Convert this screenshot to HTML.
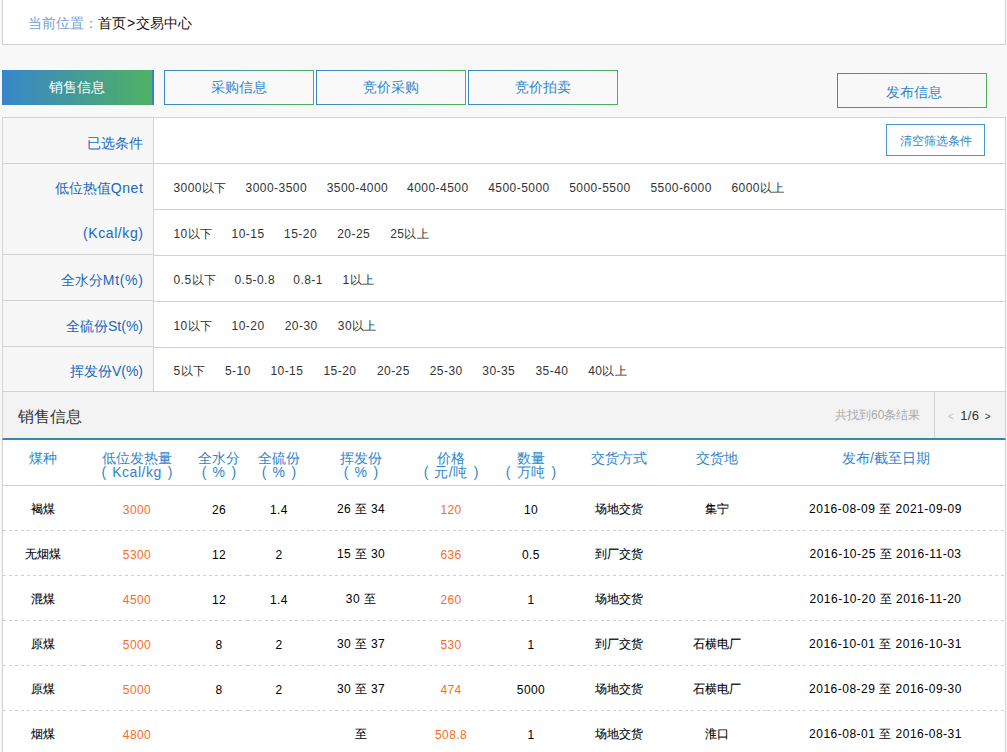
<!DOCTYPE html>
<html><head><meta charset="utf-8">
<style>
*{margin:0;padding:0;box-sizing:border-box}
html,body{width:1007px;height:752px;overflow:hidden;background:#f8f8f8;font-family:"Liberation Sans",sans-serif;color:#333}
.abs{position:absolute}
#crumb{left:2px;top:-1px;width:1004px;height:46px;border:1px solid #d2d2d2;background:#fff;font-size:14px;line-height:14px}
#crumb .t{position:absolute;left:25px;top:16px;white-space:nowrap}
#crumb .b{color:#6f9fd8}
#crumb .k{color:#111}
.tab{position:absolute;top:70px;height:35px;width:150px;border:1px solid;border-image:linear-gradient(to right,#3a89cd,#4bb35b) 1;font-size:14px;line-height:33px;text-align:center;color:#2f86cc;background:#f9f9f9}
#t1{left:2px;width:152px;border:0;background:linear-gradient(to right,#3886ca,#4fb163);color:#fff;line-height:35px;border-right:2px solid #2f82c9}
#t2{left:164px}#t3{left:316px}#t4{left:468px}
#pub{position:absolute;left:837px;top:73px;width:150px;height:35px;border:1px solid;border-image:linear-gradient(to right,#3a89cd,#4bb35b) 1;font-size:14px;line-height:33px;text-align:center;color:#2f86cc;padding-left:4px;padding-top:2px}
#filter{left:2px;top:117px;width:1004px;height:275px;border:1px solid #d2d2d2;background:#fff}
#fl{position:absolute;left:0;top:0;width:151px;height:273px;background:#f7f7f7;border-right:1px solid #d2d2d2}
.lrow{position:absolute;left:0;width:150px;border-bottom:1px solid #d2d2d2;text-align:right;padding-right:10px;color:#1768c0;font-size:14px;padding-top:2px}
.ls{margin-right:-.6px}
.rrow{position:absolute;left:151px;width:851px;border-bottom:1px solid #d2d2d2;font-size:12px;color:#333;white-space:nowrap}
.rrow span{position:absolute;top:1px;letter-spacing:.45px}
#clear{position:absolute;left:732px;top:6px;padding-top:1px;width:99px;height:32px;border:1px solid #4a93d2;color:#2f86cc;font-size:12px;line-height:30px;text-align:center}
#sh{left:2px;top:392px;width:1004px;height:48px;border:1px solid #d2d2d2;border-top:0;border-bottom:2px solid #3388b8;background:#f3f3f3}
#sh .title{position:absolute;left:15px;top:17px;font-size:16px;line-height:16px;color:#333}
#sh .cnt{position:absolute;left:832px;top:17px;font-size:12px;line-height:12px;color:#aaa}
#sh .sep{position:absolute;left:931px;top:0;width:1px;height:46px;background:#d2d2d2}
#sh .pg{position:absolute;left:945px;top:17px;font-size:13px;line-height:13px;color:#333;white-space:nowrap}
#sh .pg .l{color:#bbb;font-size:10px}
#sh .pg .r{font-size:10px;margin-left:5.5px}
#sh .pg .m{margin-left:6.5px;letter-spacing:.3px}
#tbl{left:2px;top:440px;width:1004px;height:320px;border-left:1px solid #d2d2d2;border-right:1px solid #d2d2d2;background:#fff}
table{border-collapse:separate;border-spacing:0;table-layout:fixed;width:1002px}
th{height:46px;border-bottom:1px solid #d2d2d2;font-weight:normal;color:#2f86cc;font-size:14px;line-height:14px;vertical-align:top;padding-top:11px}
td{height:45px;background:repeating-linear-gradient(to right,#cfcfcf 0 3px,transparent 3px 6px) left bottom/100% 1px no-repeat border-box;text-align:center;font-size:12px;color:#000;padding:2px 0 0}
td.o{color:#fa6c1e}
td{letter-spacing:.4px}
td.d{letter-spacing:.5px;padding-right:1px}
td.c{letter-spacing:0;-webkit-text-stroke:.1px #000}
th i{font-style:normal}
th i.pl{margin-right:6px}
th i.pr{margin-left:6px}
th b{font-weight:normal;letter-spacing:.5px}
</style></head><body>
<div id="crumb" class="abs"><div class="t"><span class="b">当前位置：</span><span class="k">首页<span style="margin:0 1px">&gt;</span>交易中心</span></div></div>

<div class="tab" id="t1">销售信息</div>
<div class="tab" id="t2">采购信息</div>
<div class="tab" id="t3">竞价采购</div>
<div class="tab" id="t4">竞价拍卖</div>
<div id="pub">发布信息</div>

<div id="filter" class="abs">
  <div id="fl"></div>
  <div class="lrow" style="top:0;height:46px;line-height:46px">已选条件</div>
  <div class="lrow" style="top:46px;height:91px;line-height:14px;padding-top:17px">低位热值<span class="ls" style="letter-spacing:.65px">Qnet</span><br><span class="ls" style="display:inline-block;margin-top:31px;letter-spacing:.6px">(Kcal/kg)</span></div>
  <div class="lrow" style="top:137px;height:46px;line-height:46px">全水分<span class="ls" style="letter-spacing:.7px">Mt(%)</span></div>
  <div class="lrow" style="top:183px;height:46px;line-height:46px">全硫份St(%)</div>
  <div class="lrow" style="top:229px;height:45px;line-height:45px;border-bottom:0">挥发份V(%)</div>

  <div class="rrow" style="top:0;height:46px"><div id="clear">清空筛选条件</div></div>
  <div class="rrow" style="top:46px;height:46px;line-height:46px"><span style="left:19.5px">3000以下</span><span style="left:91.6px">3000-3500</span><span style="left:172.7px">3500-4000</span><span style="left:253.1px">4000-4500</span><span style="left:334.2px">4500-5000</span><span style="left:415.2px">5000-5500</span><span style="left:496.4px">5500-6000</span><span style="left:577.4px">6000以上</span></div>
  <div class="rrow" style="top:92px;height:46px;line-height:46px"><span style="left:19.5px">10以下</span><span style="left:77.6px">10-15</span><span style="left:130.1px">15-20</span><span style="left:183.2px">20-25</span><span style="left:236.2px">25以上</span></div>
  <div class="rrow" style="top:138px;height:46px;line-height:46px"><span style="left:19.5px">0.5以下</span><span style="left:80.5px">0.5-0.8</span><span style="left:139.3px">0.8-1</span><span style="left:188.5px">1以上</span></div>
  <div class="rrow" style="top:184px;height:46px;line-height:46px"><span style="left:19.5px">10以下</span><span style="left:77.6px">10-20</span><span style="left:130.7px">20-30</span><span style="left:183.8px">30以上</span></div>
  <div class="rrow" style="top:230px;height:44px;line-height:44px;border-bottom:0"><span style="left:19.5px">5以下</span><span style="left:71.0px">5-10</span><span style="left:116.4px">10-15</span><span style="left:169.5px">15-20</span><span style="left:222.9px">20-25</span><span style="left:275.7px">25-30</span><span style="left:328.3px">30-35</span><span style="left:381.5px">35-40</span><span style="left:434.2px">40以上</span></div>
</div>

<div id="sh" class="abs">
  <div class="title">销售信息</div>
  <div class="cnt">共找到60条结果</div>
  <div class="sep"></div>
  <div class="pg"><span class="l">&lt;</span><span class="m">1/6</span><span class="r">&gt;</span></div>
</div>

<div id="tbl" class="abs">
<table>
<colgroup><col style="width:80px"><col style="width:108px"><col style="width:56px"><col style="width:64px"><col style="width:100px"><col style="width:80px"><col style="width:80px"><col style="width:96px"><col style="width:100px"><col></colgroup>
<tr><th>煤种</th><th>低位发热量<br><i class="pl">(</i><b class="u">Kcal/kg</b><i class="pr">)</i></th><th>全水分<br><i class="pl">(</i><b class="u">%</b><i class="pr">)</i></th><th>全硫份<br><i class="pl">(</i><b class="u">%</b><i class="pr">)</i></th><th>挥发份<br><i class="pl">(</i><b class="u">%</b><i class="pr">)</i></th><th>价格<br><i class="pl">(</i><b class="u">元/吨</b><i class="pr">)</i></th><th>数量<br><i class="pl">(</i><b class="u">万吨</b><i class="pr">)</i></th><th>交货方式</th><th>交货地</th><th>发布/截至日期</th></tr>
<tr><td class="c">褐煤</td><td class="o">3000</td><td>26</td><td>1.4</td><td>26 至 34</td><td class="o">120</td><td>10</td><td class="c">场地交货</td><td class="c">集宁</td><td class="d">2016-08-09 至 2021-09-09</td></tr>
<tr><td class="c">无烟煤</td><td class="o">5300</td><td>12</td><td>2</td><td>15 至 30</td><td class="o">636</td><td>0.5</td><td class="c">到厂交货</td><td class="c"></td><td class="d">2016-10-25 至 2016-11-03</td></tr>
<tr><td class="c">混煤</td><td class="o">4500</td><td>12</td><td>1.4</td><td>30 至 </td><td class="o">260</td><td>1</td><td class="c">场地交货</td><td class="c"></td><td class="d">2016-10-20 至 2016-11-20</td></tr>
<tr><td class="c">原煤</td><td class="o">5000</td><td>8</td><td>2</td><td>30 至 37</td><td class="o">530</td><td>1</td><td class="c">到厂交货</td><td class="c">石横电厂</td><td class="d">2016-10-01 至 2016-10-31</td></tr>
<tr><td class="c">原煤</td><td class="o">5000</td><td>8</td><td>2</td><td>30 至 37</td><td class="o">474</td><td>5000</td><td class="c">场地交货</td><td class="c">石横电厂</td><td class="d">2016-08-29 至 2016-09-30</td></tr>
<tr><td class="c">烟煤</td><td class="o">4800</td><td class="c"></td><td class="c"></td><td class="c">至</td><td class="o">508.8</td><td>1</td><td class="c">场地交货</td><td class="c">淮口</td><td class="d">2016-08-01 至 2016-08-31</td></tr>
</table>
</div>
</body></html>
